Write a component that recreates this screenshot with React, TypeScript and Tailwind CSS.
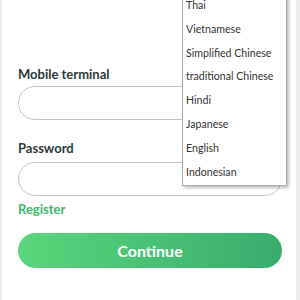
import React from 'react';

const languages = [
    'Thai',
    'Vietnamese',
    'Simplified Chinese',
    'traditional Chinese',
    'Hindi',
    'Japanese',
    'English',
    'Indonesian',
];

export default function App() {
    return (
        <div
            className="w-[300px] h-[300px] overflow-hidden bg-[#ededed] pl-[2px] pr-[4px] flex"
            style={{ fontFamily: 'Lato, "Open Sans", sans-serif' }}
        >
            <div className="relative flex-1 bg-white">
                {/* Login form */}
                <div className="pl-[16px] pr-[14px] pt-[64px] flex flex-col">
                    <label className="text-[13px] leading-[20px] font-bold text-[#2d3838]">Mobile terminal</label>
                    <input className="mt-[2px] h-[34px] w-full rounded-full border border-[#c4c4c4] bg-white outline-none" />

                    <label className="mt-[18px] text-[13px] leading-[20px] font-bold text-[#2d3838]">Password</label>
                    <input
                        type="password"
                        className="mt-[4px] h-[34px] w-full rounded-full border border-[#c4c4c4] bg-white outline-none"
                    />

                    <a className="mt-[4px] text-[13px] leading-[18px] font-bold text-[#3cb96c]">Register</a>

                    <button className="mt-[15px] h-[35px] w-full rounded-full bg-gradient-to-r from-[#5ad67c] to-[#38ad6c] text-white text-[16px] font-bold">
                        Continue
                    </button>
                </div>

                {/* Language dropdown */}
                <ul className="absolute left-[180px] top-[-7px] w-[105px] pb-[1px] bg-white border border-[#a8a8a8] shadow-[2px_2px_3px_rgba(0,0,0,0.25)]">
                    {languages.map(lang => (
                        <li key={lang} className="h-[23.8px] flex items-center pl-[3px] text-[10.6px] text-[#333] whitespace-nowrap">
                            {lang}
                        </li>
                    ))}
                </ul>
            </div>
        </div>
    );
}
